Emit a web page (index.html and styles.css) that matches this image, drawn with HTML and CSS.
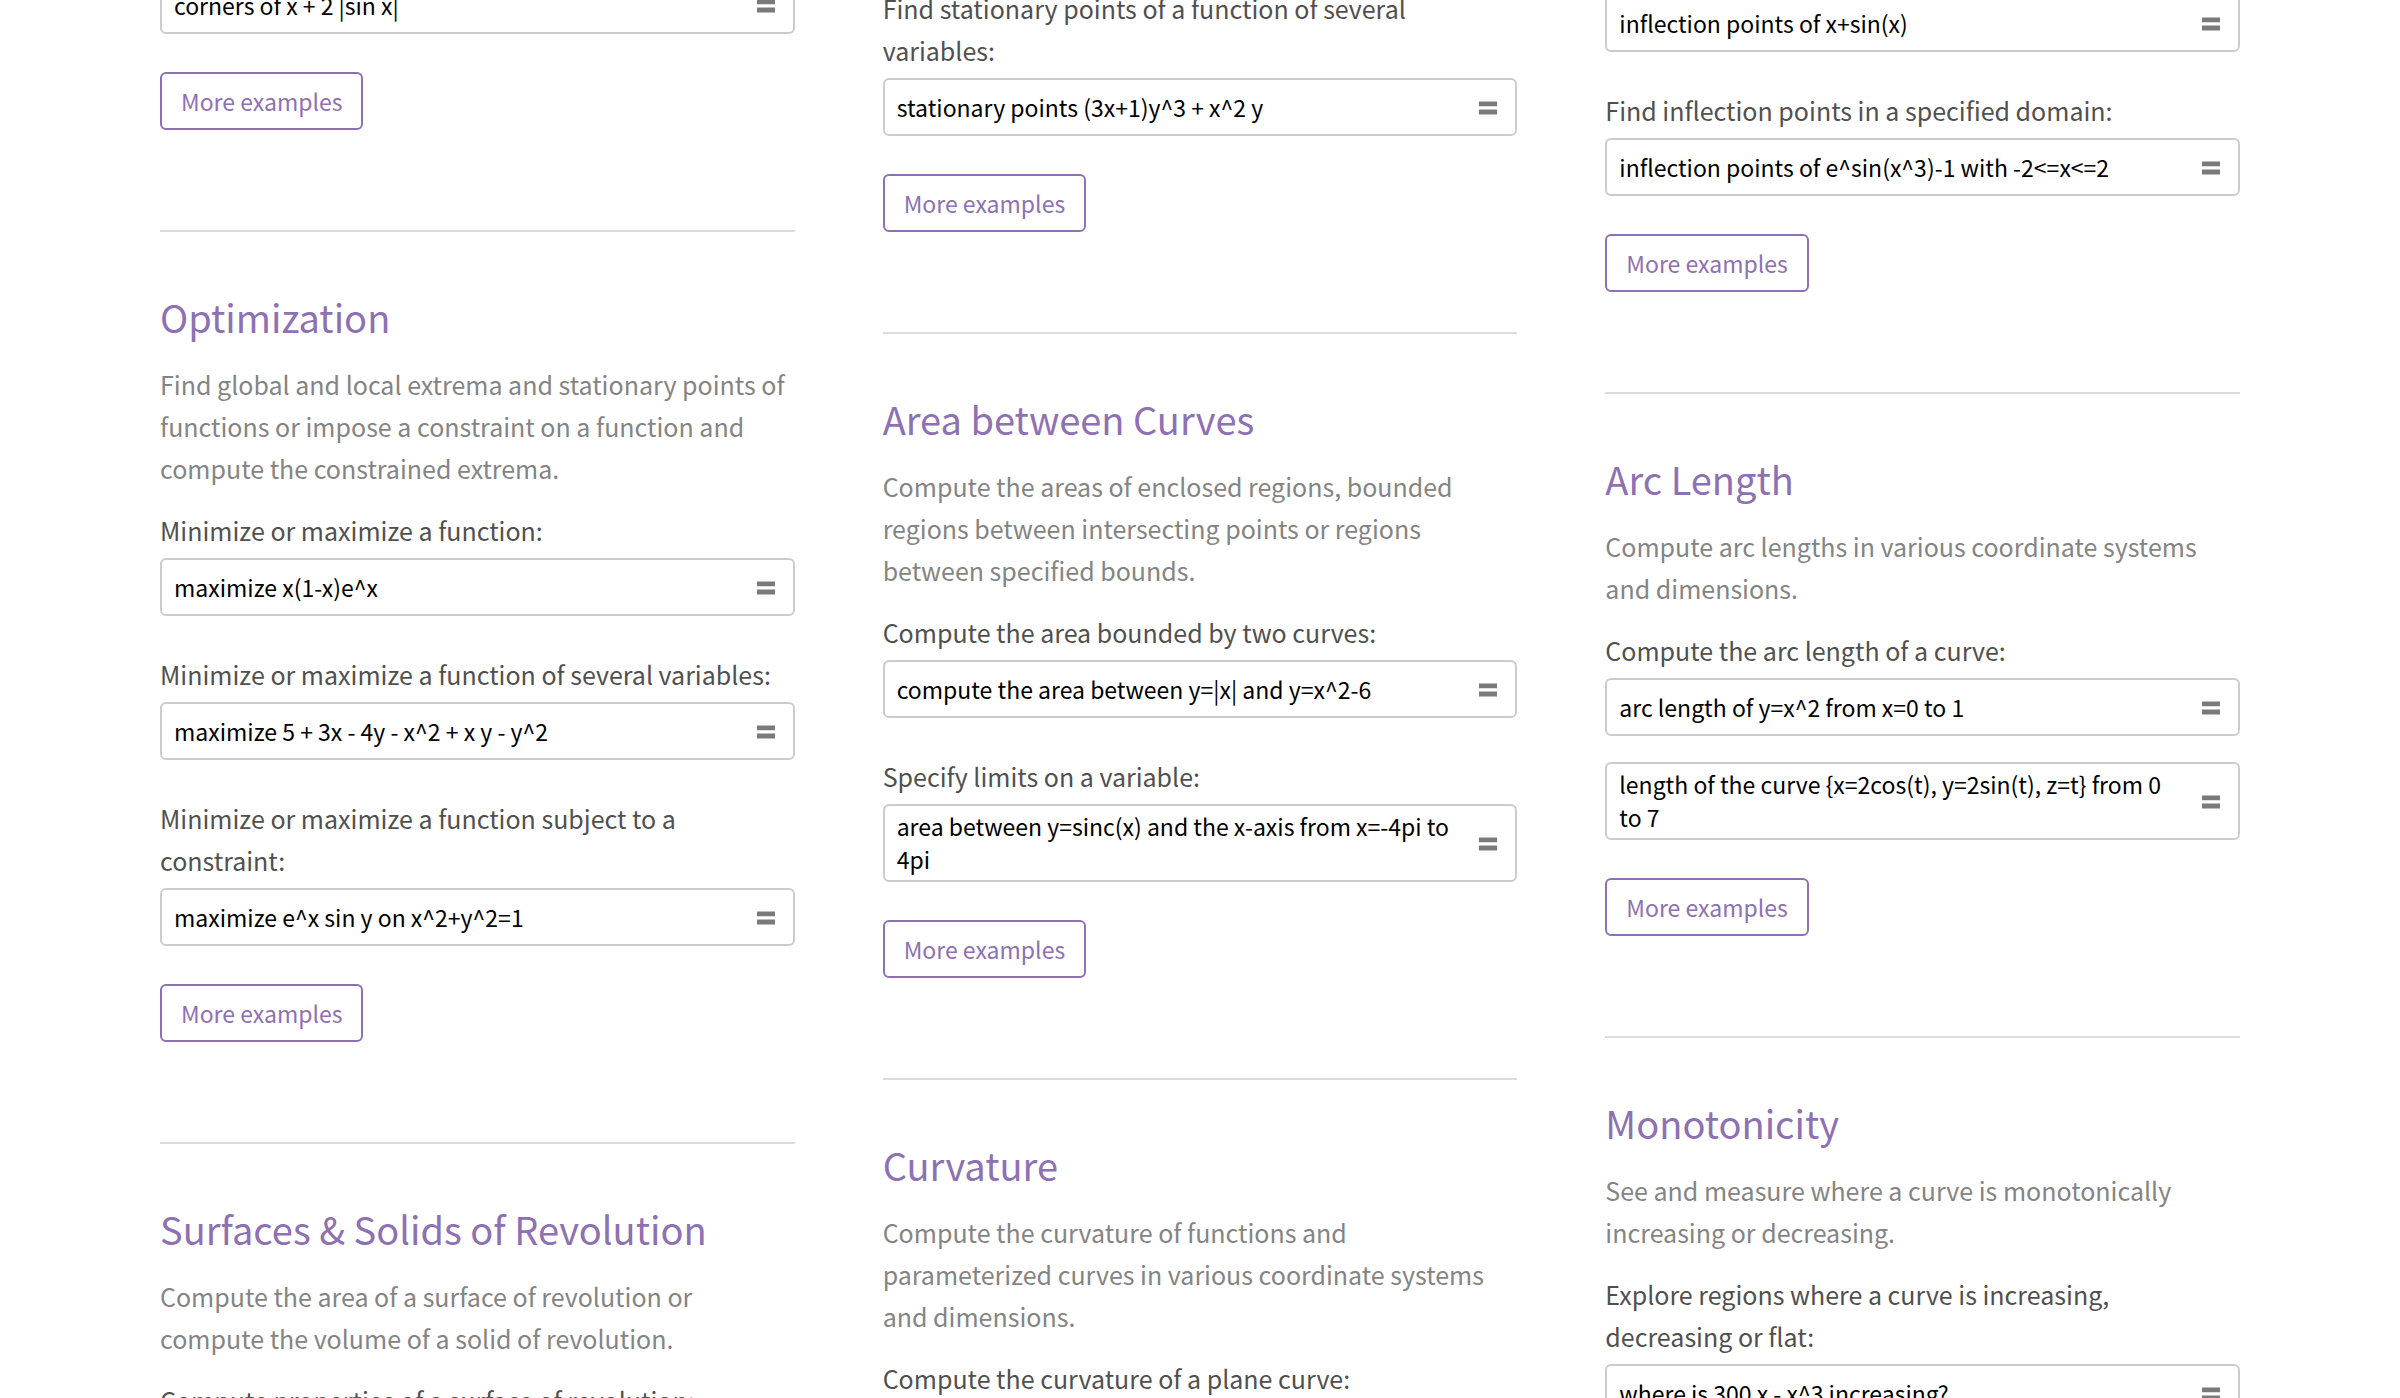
FILE: index.html
```html
<!DOCTYPE html>
<html lang="en">
<head>
<meta charset="utf-8">
<meta name="viewport" content="width=device-width, initial-scale=1">
<title>Applications of Calculus</title>
<link rel="stylesheet" href="styles.css">
</head>
<body>
<svg class="sprite" aria-hidden="true">
  <symbol id="equals" viewBox="0 0 18 16"><path d="M0 2.4h18v4.8H0zM0 10.6h18v4.8H0z" fill="currentColor"/></symbol>
</svg>
<main class="topics">
  <div class="column column-corners">
    <section class="topic">
      <div class="examples">
        <a class="query" href="#"><span>corners of x + 2 |sin x|</span><svg class="equals"><use href="#equals"/></svg></a>
      </div>
      <button class="more" type="button">More examples</button>
    </section>
    <section class="topic">
      <h2>Optimization</h2>
      <p class="summary">Find global and local extrema and stationary points of functions or impose a constraint on a function and compute the constrained extrema.</p>
      <div class="examples">
        <h3>Minimize or maximize a function:</h3>
        <a class="query" href="#"><span>maximize x(1-x)e^x</span><svg class="equals"><use href="#equals"/></svg></a>
      </div>
      <div class="examples">
        <h3>Minimize or maximize a function of several variables:</h3>
        <a class="query" href="#"><span>maximize 5 + 3x - 4y - x^2 + x y - y^2</span><svg class="equals"><use href="#equals"/></svg></a>
      </div>
      <div class="examples">
        <h3>Minimize or maximize a function subject to a constraint:</h3>
        <a class="query" href="#"><span>maximize e^x sin y on x^2+y^2=1</span><svg class="equals"><use href="#equals"/></svg></a>
      </div>
      <button class="more" type="button">More examples</button>
    </section>
    <section class="topic">
      <h2>Surfaces &amp; Solids of Revolution</h2>
      <p class="summary">Compute the area of a surface of revolution or compute the volume of a solid of revolution.</p>
      <div class="examples">
        <h3>Compute properties of a surface of revolution:</h3>
      </div>
    </section>
  </div>

  <div class="column column-stationary">
    <section class="topic">
      <div class="examples">
        <h3>Find stationary points of a function of several variables:</h3>
        <a class="query" href="#"><span>stationary points (3x+1)y^3 + x^2 y</span><svg class="equals"><use href="#equals"/></svg></a>
      </div>
      <button class="more" type="button">More examples</button>
    </section>
    <section class="topic">
      <h2>Area between Curves</h2>
      <p class="summary">Compute the areas of enclosed regions, bounded regions between intersecting points or regions between specified bounds.</p>
      <div class="examples">
        <h3>Compute the area bounded by two curves:</h3>
        <a class="query" href="#"><span>compute the area between y=|x| and y=x^2-6</span><svg class="equals"><use href="#equals"/></svg></a>
      </div>
      <div class="examples">
        <h3>Specify limits on a variable:</h3>
        <a class="query" href="#"><span>area between y=sinc(x) and the x-axis from x=-4pi to 4pi</span><svg class="equals"><use href="#equals"/></svg></a>
      </div>
      <button class="more" type="button">More examples</button>
    </section>
    <section class="topic">
      <h2>Curvature</h2>
      <p class="summary">Compute the curvature of functions and parameterized curves in various coordinate systems and dimensions.</p>
      <div class="examples">
        <h3>Compute the curvature of a plane curve:</h3>
      </div>
    </section>
  </div>

  <div class="column column-inflection">
    <section class="topic">
      <div class="examples">
        <a class="query" href="#"><span>inflection points of x+sin(x)</span><svg class="equals"><use href="#equals"/></svg></a>
      </div>
      <div class="examples">
        <h3>Find inflection points in a specified domain:</h3>
        <a class="query" href="#"><span>inflection points of e^sin(x^3)-1 with -2&lt;=x&lt;=2</span><svg class="equals"><use href="#equals"/></svg></a>
      </div>
      <button class="more" type="button">More examples</button>
    </section>
    <section class="topic">
      <h2>Arc Length</h2>
      <p class="summary">Compute arc lengths in various coordinate systems and dimensions.</p>
      <div class="examples">
        <h3>Compute the arc length of a curve:</h3>
        <a class="query" href="#"><span>arc length of y=x^2 from x=0 to 1</span><svg class="equals"><use href="#equals"/></svg></a>
        <a class="query" href="#"><span>length of the curve {x=2cos(t), y=2sin(t), z=t} from 0 to 7</span><svg class="equals"><use href="#equals"/></svg></a>
      </div>
      <button class="more" type="button">More examples</button>
    </section>
    <section class="topic">
      <h2>Monotonicity</h2>
      <p class="summary">See and measure where a curve is monotonically increasing or decreasing.</p>
      <div class="examples">
        <h3>Explore regions where a curve is increasing, decreasing or flat:</h3>
        <a class="query" href="#"><span>where is 300 x - x^3 increasing?</span><svg class="equals"><use href="#equals"/></svg></a>
      </div>
    </section>
  </div>
</main>
</body>
</html>
```
FILE: styles.css
```css
* {
  box-sizing: border-box;
}

body {
  height: 100vh;
  margin: 0;
  overflow: hidden;
  background: #fff;
  color: #505050;
  font: 25px/42px "Noto Sans CJK SC", sans-serif;
}

.sprite {
  display: none;
}

.topics {
  display: grid;
  grid-template-columns: repeat(3, minmax(0, 1fr));
  column-gap: 88px;
  align-items: start;
  padding: 0 160px;
}

/* Each column is scrolled partway through its first topic. */
.column-corners {
  margin-top: -24px;
}

.column-stationary {
  margin-top: -13px;
}

.column-inflection {
  margin-top: -6px;
}

.topic + .topic {
  margin-top: 100px;
  padding-top: 57px;
  border-top: 2px solid #ddd;
}

h2,
h3,
p {
  margin: 0;
  font-weight: 400;
}

h2 {
  margin-bottom: 18px;
  color: #8d71b2;
  font-size: 38px;
  line-height: 56px;
}

h3 {
  margin-bottom: 7px;
  font-size: 25px;
}

.summary {
  margin-bottom: 20px;
  color: #848484;
}

.examples + .examples {
  margin-top: 37px;
}

.query {
  display: flex;
  align-items: center;
  justify-content: space-between;
  gap: 16px;
  min-height: 58px;
  padding: 4px 18px 4px 12px;
  border: 2px solid #ccc;
  border-radius: 6px;
  color: #000;
  font-size: 23px;
  line-height: 33px;
  text-decoration: none;
}

.query + .query {
  margin-top: 26px;
}

.equals {
  flex: none;
  width: 18px;
  height: 16px;
  color: #7a7a7a;
}

.more {
  display: block;
  height: 58px;
  margin-top: 38px;
  padding: 0 19px;
  border: 2px solid #8d71b2;
  border-radius: 6px;
  background: #fff;
  color: #8d71b2;
  font: inherit;
  font-size: 23px;
  line-height: 33px;
}
```
